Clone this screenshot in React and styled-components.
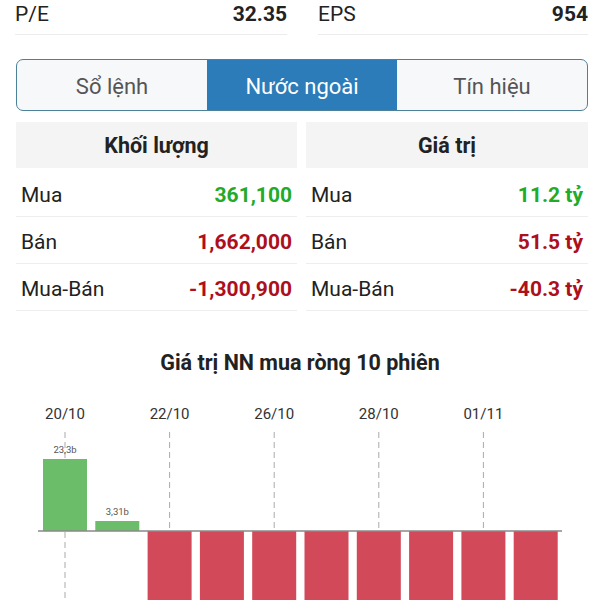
import styled, { createGlobalStyle } from "styled-components";

const GlobalStyle = createGlobalStyle`
    body {
        margin: 0;
        background: #fff;
        font-family: Roboto, "Noto Sans", sans-serif;
        color: #222;
    }
`

const stats = [
    { label: "P/E", value: "32.35" },
    { label: "EPS", value: "954" },
];

const tabs = ["Sổ lệnh", "Nước ngoài", "Tín hiệu"];

const tables = [
    {
        title: "Khối lượng",
        rows: [
            { label: "Mua", value: "361,100", up: true },
            { label: "Bán", value: "1,662,000" },
            { label: "Mua-Bán", value: "-1,300,900" },
        ],
    },
    {
        title: "Giá trị",
        rows: [
            { label: "Mua", value: "11.2 tỷ", up: true },
            { label: "Bán", value: "51.5 tỷ" },
            { label: "Mua-Bán", value: "-40.3 tỷ" },
        ],
    },
];

// net foreign value per session, only the sign/size matter for drawing
const sessions = [23.3, 3.31, -30, -30, -30, -30, -30, -30, -30, -30];
const dates = ["20/10", "22/10", "26/10", "28/10", "01/11"];

const App = () => {
    return (
        <Page>
            <GlobalStyle />
            <StatsRow>
                {stats.map((s) => (
                    <StatCell key={s.label}>
                        <span>{s.label}</span>
                        <StatValue>{s.value}</StatValue>
                    </StatCell>
                ))}
            </StatsRow>

            <Tabs>
                {tabs.map((t, i) => (
                    <Tab key={t} $active={i === 1}>{t}</Tab>
                ))}
            </Tabs>

            <TableGrid>
                {tables.map((tb) => (
                    <Column key={tb.title}>
                        <HeaderCell>{tb.title}</HeaderCell>
                        {tb.rows.map((r) => (
                            <Row key={r.label}>
                                <span>{r.label}</span>
                                <RowValue $up={r.up}>{r.value}</RowValue>
                            </Row>
                        ))}
                    </Column>
                ))}
            </TableGrid>

            <ChartTitle>Giá trị NN mua ròng 10 phiên</ChartTitle>
            <Chart />
        </Page>
    )
}

const Chart = () => {
    const zeroY = 156;
    const step = 52.3;
    const barW = 44;
    return (
        <ChartSvg width="600" height="226" viewBox="0 0 600 226">
            {dates.map((d, i) => {
                const cx = 43 + i * 2 * step + barW / 2;
                return (
                    <g key={d}>
                        <text x={cx} y="44" textAnchor="middle" fontSize="15" fill="#333">{d}</text>
                        <line x1={cx} y1="57" x2={cx} y2="226" stroke="#aaa" strokeWidth="1" strokeDasharray="6 4" />
                    </g>
                )
            })}
            {sessions.map((v, i) => {
                const x = 43 + i * step;
                if (v > 0) {
                    const h = i === 0 ? 72 : 10;
                    return (
                        <g key={i}>
                            <rect x={x} y={zeroY - h} width={barW} height={h} fill="#6bbd69" />
                            <text x={x + barW / 2} y={zeroY - h - 6} textAnchor="middle" fontSize="9.5" fill="#555">
                                {String(v).replace(".", ",")}b
                            </text>
                        </g>
                    )
                }
                return <rect key={i} x={x} y={zeroY} width={barW} height={80} fill="#d2495a" />
            })}
            <line x1="38" y1={zeroY} x2="562" y2={zeroY} stroke="#888" strokeWidth="1.5" />
        </ChartSvg>
    )
}

const Page = styled.div`
    width: 600px;
    height: 600px;
    overflow: hidden;
`

const StatsRow = styled.div`
    display: grid;
    grid-template-columns: 272px 270px;
    column-gap: 31px;
    padding-left: 15px;
`

const StatCell = styled.div`
    display: flex;
    justify-content: space-between;
    height: 34px;
    line-height: 29px;
    font-size: 21px;
    border-bottom: 1px solid #ececec;
`

const StatValue = styled.span`
    font-weight: bold;
    color: #222;
`

const Tabs = styled.div`
    display: grid;
    grid-template-columns: repeat(3, 1fr);
    margin: 24px 12px 0 16px;
    height: 52px;
    box-sizing: border-box;
    border: 1.5px solid #4d8199;
    border-radius: 7px;
    overflow: hidden;
    background: #f6f8f9;
`

const Tab = styled.div`
    display: flex;
    align-items: center;
    justify-content: center;
    padding-top: 3px;
    font-size: 22px;
    color: ${(p) => (p.$active ? "#fff" : "#555")};
    background: ${(p) => (p.$active ? "#2b7cb8" : "transparent")};
`

const TableGrid = styled.div`
    display: grid;
    grid-template-columns: 281px 282px;
    column-gap: 9px;
    margin: 11px 12px 0 16px;
`

const Column = styled.div`
    display: flex;
    flex-direction: column;
`

const HeaderCell = styled.div`
    height: 46px;
    background: #f4f4f4;
    display: flex;
    align-items: center;
    justify-content: center;
    font-size: 21.5px;
    font-weight: bold;
    color: #222;
`

const Row = styled.div`
    display: flex;
    align-items: center;
    justify-content: space-between;
    height: 47px;
    padding: 3px 5px 0;
    box-sizing: border-box;
    border-bottom: 1px solid #eeeeee;
    font-size: 21px;
    color: #222;

    &:nth-child(2) {
        height: 49px;
        padding-top: 5px;
    }
`

const RowValue = styled.span`
    font-weight: bold;
    color: ${(p) => (p.$up ? "#22aa2a" : "#ad0f1c")};
`

const ChartTitle = styled.div`
    margin-top: 40px;
    text-align: center;
    font-size: 21.5px;
    line-height: 24px;
    font-weight: bold;
    color: #222;
`

const ChartSvg = styled.svg`
    display: block;
    font-family: Roboto, "Noto Sans", sans-serif;
`

export default App;
